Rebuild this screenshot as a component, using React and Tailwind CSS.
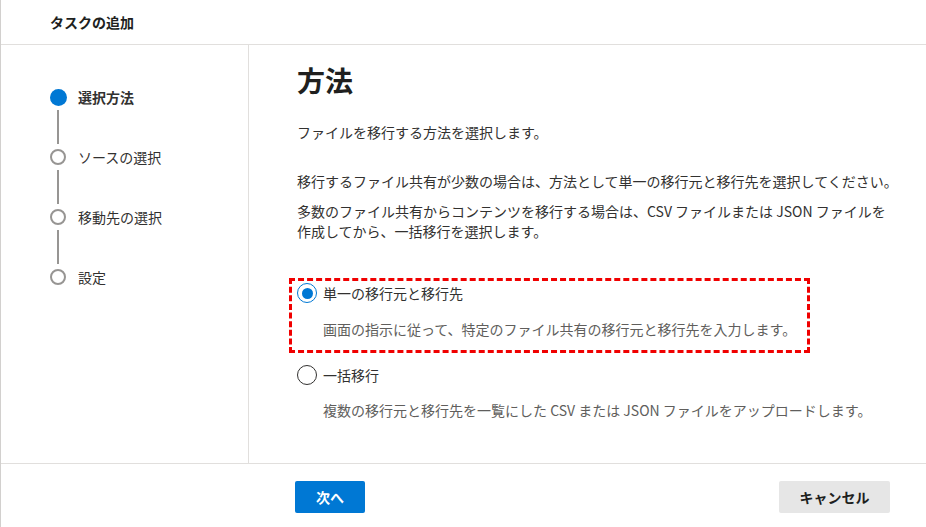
import React from 'react';

const steps = ['選択方法', 'ソースの選択', '移動先の選択', '設定'];

const Radio = ({ checked }) => (
  <span
    className={`flex h-[20px] w-[20px] shrink-0 items-center justify-center rounded-full border bg-white ${
      checked ? 'border-[#0078d4]' : 'border-[#323130]'
    }`}
  >
    {checked && <span className="h-[11px] w-[11px] rounded-full bg-[#0078d4]" />}
  </span>
);

const App = () => {
  return (
    <div
      className="flex h-[527px] w-[926px] flex-col overflow-hidden border-l border-[#d2d0ce] bg-white text-[14px] text-[#323130]"
      style={{ fontFamily: '"Noto Sans CJK JP", "Noto Sans", sans-serif' }}
    >
      {/* Header */}
      <header className="flex h-[45px] shrink-0 items-center border-b border-[#e1dfdd] pl-[49px]">
        <h1 className="text-[14px] font-bold leading-5 text-[#201f1e]">タスクの追加</h1>
      </header>

      <div className="flex min-h-0 flex-1">
        {/* Steps */}
        <aside className="w-[248px] shrink-0 border-r border-[#e1dfdd] pl-[48px] pt-[43px]">
          {steps.map((label, i) => (
            <div key={label}>
              <div className="flex h-[18px] items-center">
                <span className="flex w-[18px] justify-center">
                  <span
                    className={`rounded-full ${
                      i === 0 ? 'h-[17px] w-[17px] bg-[#0078d4]' : 'h-[16px] w-[16px] border-2 border-[#979593] bg-white'
                    }`}
                  />
                </span>
                <span className={`ml-[11px] leading-5 text-[#323130] ${i === 0 ? 'font-bold' : ''}`}>{label}</span>
              </div>
              {i < steps.length - 1 && (
                <div className="flex w-[18px] justify-center">
                  <span className="my-[4px] h-[34px] w-[2px] bg-[#979593]" />
                </div>
              )}
            </div>
          ))}
        </aside>

        {/* Content */}
        <main className="flex-1 pl-[48px] pt-[17px]">
          <h2 className="text-[28px] font-bold leading-9 text-[#201f1e]">方法</h2>
          <p className="mt-[24px] leading-5">ファイルを移行する方法を選択します。</p>
          <p className="mt-[29px] leading-5">
            移行するファイル共有が少数の場合は、方法として単一の移行元と移行先を選択してください。
          </p>
          <p className="mt-[10px] w-[600px] leading-5">
            多数のファイル共有からコンテンツを移行する場合は、CSV ファイルまたは JSON ファイルを作成してから、一括移行を選択します。
          </p>

          <div className="-ml-[8px] mt-[37px] w-[521px] border-[3px] border-dashed border-[#f00000] pb-[11px] pl-[5px] pt-[2px]">
            <div className="flex items-center gap-[6px]">
              <Radio checked />
              <span className="leading-5">単一の移行元と移行先</span>
            </div>
            <p className="mt-[16px] pl-[26px] leading-5 text-[#605e5c]">
              画面の指示に従って、特定のファイル共有の移行元と移行先を入力します。
            </p>
          </div>

          <div className="mt-[12px] flex items-center gap-[6px]">
            <Radio />
            <span className="leading-5">一括移行</span>
          </div>
          <p className="mt-[15px] pl-[26px] leading-5 text-[#605e5c]">
            複数の移行元と移行先を一覧にした CSV または JSON ファイルをアップロードします。
          </p>
        </main>
      </div>

      {/* Footer */}
      <footer className="flex h-[64px] shrink-0 items-start justify-between border-t border-[#e1dfdd] pl-[294px] pr-[36px] pt-[17px]">
        <button className="h-[32px] w-[70px] rounded-[2px] bg-[#0078d4] text-[14px] font-bold text-white">次へ</button>
        <button className="h-[32px] w-[111px] rounded-[2px] bg-[#e6e6e6] text-[14px] font-bold text-[#201f1e]">
          キャンセル
        </button>
      </footer>
    </div>
  );
};

export default App;
